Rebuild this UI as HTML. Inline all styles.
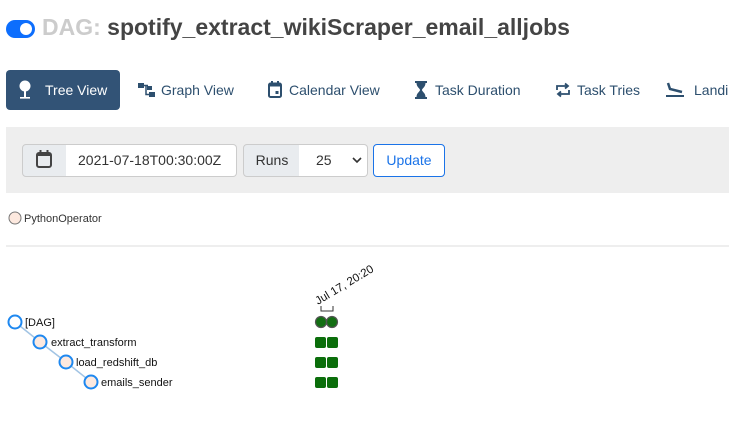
<!DOCTYPE html>
<html style="overflow:hidden"><head><meta charset="utf-8"><style>
html,body{overflow:hidden}
body{margin:0;width:729px;height:426px;overflow:hidden;background:#fff;font-family:"Liberation Sans",Arial,sans-serif;position:relative}
.a{position:absolute}
.nav{position:absolute;top:82px;font-size:14px;color:#2d4f6e;white-space:nowrap}
</style></head><body>
<div class="a" style="left:6px;top:20px;width:29px;height:18px;border-radius:9px;background:#0d6efd"></div>
<div class="a" style="left:20px;top:23px;width:12px;height:12px;border-radius:50%;background:#fff"></div>
<div class="a" style="left:42px;top:14px;font-size:23px;font-weight:bold;color:#444;white-space:nowrap"><span style="color:#ccc">DAG:</span> spotify_extract_wikiScraper_email_alljobs</div>

<div class="a" style="left:6px;top:70px;width:114px;height:40px;background:#325376;border-radius:4px"></div>
<svg class="a" style="left:18px;top:80px" width="14" height="20" viewBox="0 0 14 20"><circle cx="7" cy="6" r="5.5" fill="#fff"/><rect x="6" y="10" width="2" height="7" fill="#fff"/><rect x="2" y="17" width="10" height="1.6" fill="#fff"/></svg>
<div class="nav" style="left:45px;color:#fff">Tree View</div>
<svg class="a" style="left:138px;top:83px" width="18" height="15" viewBox="0 0 18 15"><rect x="0" y="0" width="6" height="5" fill="#2d4f6e"/><rect x="9" y="3" width="5" height="4" fill="#2d4f6e"/><rect x="11" y="9" width="6" height="5" fill="#2d4f6e"/><path d="M6 2.5H10M8 2.5V11.5H11" stroke="#2d4f6e" stroke-width="1.5" fill="none"/></svg>
<div class="nav" style="left:161px">Graph View</div>
<svg class="a" style="left:268px;top:81px" width="14" height="17" viewBox="0 0 14 17"><rect x="1" y="2.5" width="12" height="13.5" rx="1.5" fill="none" stroke="#2d4f6e" stroke-width="2"/><rect x="1" y="2.5" width="12" height="3" fill="#2d4f6e"/><rect x="3" y="0" width="2" height="3" fill="#2d4f6e"/><rect x="9" y="0" width="2" height="3" fill="#2d4f6e"/><rect x="7.5" y="10" width="3" height="3" fill="#2d4f6e"/></svg>
<div class="nav" style="left:289px">Calendar View</div>
<svg class="a" style="left:415px;top:81px" width="12" height="18" viewBox="0 0 12 18"><rect x="0" y="0" width="12" height="2" fill="#2d4f6e"/><rect x="0" y="16" width="12" height="2" fill="#2d4f6e"/><path d="M1.5 2H10.5C10.5 6 7 7.5 7 9C7 10.5 10.5 12 10.5 16H1.5C1.5 12 5 10.5 5 9C5 7.5 1.5 6 1.5 2Z" fill="#2d4f6e"/></svg>
<div class="nav" style="left:435px">Task Duration</div>
<svg class="a" style="left:556px;top:82px" width="14" height="16" viewBox="0 0 14 16"><path d="M1 8V4H11M9 1.5L12 4L9 6.5M13 8V12H3M5 9.5L2 12L5 14.5" stroke="#2d4f6e" stroke-width="1.8" fill="none"/></svg>
<div class="nav" style="left:577px">Task Tries</div>
<svg class="a" style="left:666px;top:81px" width="18" height="17" viewBox="0 0 18 17"><path d="M2 2L4 8L16 11" stroke="#2d4f6e" stroke-width="2.5" fill="none"/><rect x="0" y="14" width="18" height="2" fill="#2d4f6e"/></svg>
<div class="nav" style="left:694px;width:35px;overflow:hidden">Landing</div>

<div class="a" style="left:6px;top:127px;width:723px;height:66px;background:#eee"></div>
<div class="a" style="left:22px;top:144px;width:44px;height:31px;background:#e9ecef;border:1px solid #ccc;border-radius:4px 0 0 4px"></div>
<svg class="a" style="left:36px;top:150px" width="16" height="18" viewBox="0 0 16 18"><rect x="1" y="3" width="14" height="14" rx="2" fill="none" stroke="#444" stroke-width="2"/><rect x="1" y="3" width="14" height="3" fill="#444"/><rect x="3.5" y="0" width="2" height="4" fill="#444"/><rect x="10.5" y="0" width="2" height="4" fill="#444"/></svg>
<div class="a" style="left:66px;top:144px;width:170px;height:31px;background:#fff;border:1px solid #ccc;border-left:none;border-radius:0 4px 4px 0;font-size:14px;color:#333;line-height:31px;text-indent:12px">2021-07-18T00:30:00Z</div>
<div class="a" style="left:243px;top:144px;width:56px;height:31px;background:#e9ecef;border:1px solid #ccc;border-radius:4px 0 0 4px;font-size:14px;color:#333;line-height:31px;text-align:center">Runs</div>
<div class="a" style="left:299px;top:144px;width:68px;height:31px;background:#fff;border:1px solid #ccc;border-left:none;border-radius:0 4px 4px 0;font-size:14px;color:#333;line-height:31px;text-indent:17px">25</div>
<svg class="a" style="left:352px;top:157px" width="10" height="7" viewBox="0 0 10 7"><path d="M1 1L5 5L9 1" stroke="#333" stroke-width="1.6" fill="none"/></svg>
<div class="a" style="left:373px;top:144px;width:70px;height:31px;background:#fff;border:1px solid #1a73e8;border-radius:4px;font-size:14px;color:#1a73e8;line-height:31px;text-align:center">Update</div>

<svg class="a" style="left:0;top:200px" width="729" height="226">
<circle cx="15" cy="18" r="6" fill="#fde9df" stroke="#777" stroke-width="1"/>
<text x="24" y="22" font-size="11" fill="#333" font-family="Liberation Sans">PythonOperator</text>
<rect x="6" y="45" width="723" height="2" fill="#eee"/>
<path d="M15 122L40 142L66 162L91 182" stroke="#a2c4e4" stroke-width="1.5" fill="none"/>
<g fill="#fff" stroke="#1e88f0" stroke-width="2">
<circle cx="15" cy="122" r="6.5"/>
</g>
<g fill="#fde9df" stroke="#1e88f0" stroke-width="2">
<circle cx="40" cy="142" r="6.5"/><circle cx="66" cy="162" r="6.5"/><circle cx="91" cy="182" r="6.5"/>
</g>
<g font-size="11" fill="#111" font-family="Liberation Sans">
<text x="25" y="126">[DAG]</text><text x="51" y="146">extract_transform</text><text x="76" y="166">load_redshift_db</text><text x="101" y="186">emails_sender</text>
</g>
<text x="0" y="0" font-size="11.5" fill="#111" font-family="Liberation Sans" transform="translate(318,105) rotate(-31)">Jul 17, 20:20</text>
<path d="M321 106V111H333V106" stroke="#333" stroke-width="1" fill="none"/>
<circle cx="321" cy="122" r="5.5" fill="#136e13" stroke="#555" stroke-width="1.2"/>
<circle cx="332" cy="122" r="5.5" fill="#136e13" stroke="#555" stroke-width="1.2"/>
<g fill="#0b6e0b">
<rect x="315" y="137" width="11" height="11" rx="2"/><rect x="327" y="137" width="11" height="11" rx="2"/>
<rect x="315" y="157" width="11" height="11" rx="2"/><rect x="327" y="157" width="11" height="11" rx="2"/>
<rect x="315" y="177" width="11" height="11" rx="2"/><rect x="327" y="177" width="11" height="11" rx="2"/>
</g>
</svg>
</body></html>
